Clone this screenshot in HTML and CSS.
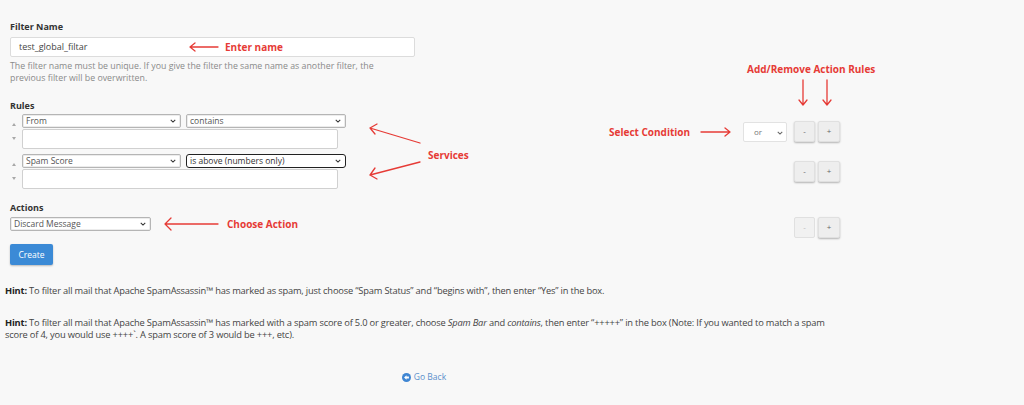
FILE: index.html
```html
<!DOCTYPE html>
<html>
<head>
<meta charset="utf-8">
<link rel="stylesheet" href="styles.css">
</head>
<body>
<div class="page">
  <div class="form">
    <div class="label">Filter Name</div>
    <div class="name-input">test_global_filtar</div>
    <p class="help">The filter name must be unique. If you give the filter the same name as another filter, the<br>previous filter will be overwritten.</p>

    <div class="label rules-label">Rules</div>

    <div class="row rule-row">
      <div class="main">
        <div class="movers"><span class="up"></span><span class="down"></span></div>
        <div class="rule">
          <div class="selects">
            <div class="sel w157">From<svg class="chev" viewBox="0 0 8 5"><path d="M1 1l3 3 3-3" /></svg></div>
            <div class="sel w158">contains<svg class="chev" viewBox="0 0 8 5"><path d="M1 1l3 3 3-3" /></svg></div>
          </div>
          <div class="textarea"></div>
        </div>
      </div>
      <div class="cond">or<svg class="chev" viewBox="0 0 8 5"><path d="M1 1l3 3 3-3" /></svg></div>
      <div class="btns"><span class="btn">-</span><span class="btn">+</span></div>
    </div>

    <div class="row rule-row second">
      <div class="main">
        <div class="movers"><span class="up"></span><span class="down"></span></div>
        <div class="rule">
          <div class="selects">
            <div class="sel w157">Spam Score<svg class="chev" viewBox="0 0 8 5"><path d="M1 1l3 3 3-3" /></svg></div>
            <div class="sel w158 focused">is above (numbers only)<svg class="chev" viewBox="0 0 8 5"><path d="M1 1l3 3 3-3" /></svg></div>
          </div>
          <div class="textarea"></div>
        </div>
      </div>
      <div class="cond empty"></div>
      <div class="btns"><span class="btn">-</span><span class="btn">+</span></div>
    </div>

    <div class="label actions-label">Actions</div>
    <div class="row action-row">
      <div class="main">
        <div class="sel w139">Discard Message<svg class="chev" viewBox="0 0 8 5"><path d="M1 1l3 3 3-3" /></svg></div>
      </div>
      <div class="cond empty"></div>
      <div class="btns"><span class="btn disabled">-</span><span class="btn">+</span></div>
    </div>

    <button class="create">Create</button>

    <p class="hint"><b>Hint:</b> To filter all mail that Apache SpamAssassin™ has marked as spam, just choose “Spam Status” and “begins with”, then enter “Yes” in the box.</p>
    <p class="hint second-hint"><b>Hint:</b> To filter all mail that Apache SpamAssassin™ has marked with a spam score of 5.0 or greater, choose <i>Spam Bar</i> and <i>contains</i>, then enter “+++++” in the box (Note: If you wanted to match a spam score of 4, you would use ++++`. A spam score of 3 would be +++, etc).</p>

    <div class="goback"><span class="back-icon"><svg viewBox="0 0 10 10"><circle cx="5" cy="5" r="5" fill="#3f86d3"/><path d="M2.3 5L5 2.6V4h2.7v2H5v1.4z" fill="#fff"/></svg></span>Go Back</div>
  </div>

  <div class="note n-enter">Enter name</div>
  <div class="note n-addremove">Add/Remove Action Rules</div>
  <div class="note n-select">Select Condition</div>
  <div class="note n-services">Services</div>
  <div class="note n-action">Choose Action</div>

  <svg class="arrows" width="1024" height="405" viewBox="0 0 1024 405">
    <g fill="none" stroke="#e63b36" stroke-width="1.3" stroke-linecap="round" stroke-linejoin="round">
      <path d="M218 47H190M195 43l-5 4 5 4"/>
      <path d="M803 80V105M799 100l4 5 4-5"/>
      <path d="M827 80V105M823 100l4 5 4-5"/>
      <path d="M701 132H730M725 128l5 4-5 4"/>
      <path d="M420 143L370 128M377 124l-7 4 5 6"/>
      <path d="M420 162L370 175M375 168l-5 7 7 4"/>
      <path d="M218 224H165M171 218l-6 6 6 6"/>
    </g>
  </svg>
</div>
</body>
</html>
```
FILE: styles.css
```css
html, body {
  margin: 0;
  padding: 0;
  background: #f8f8f8;
}
body {
  font-family: "Open Sans", "Liberation Sans", sans-serif;
  font-size: 8px;
  color: #333;
}
.page {
  position: relative;
  width: 1024px;
  height: 405px;
  overflow: hidden;
}
.form {
  padding: 21px 0 0 10px;
  width: 828px;
}
.label {
  font-weight: 700;
  font-size: 9px;
  line-height: 12px;
  color: #333;
}
.name-input {
  margin-top: 4px;
  width: 395px;
  height: 18px;
  line-height: 18px;
  padding-left: 8px;
  background: #fff;
  border: 1px solid #dcdcdc;
  border-radius: 2px;
  font-size: 9px;
  color: #444;
}
.help {
  margin: 3px 0 0;
  line-height: 12px;
  color: #8a8a8a;
  font-size: 8.8px;
}
.rules-label { margin-top: 16px; }
.row {
  display: flex;
  align-items: center;
}
.rule-row { margin-top: 2px; }
.rule-row.second { margin-top: 5px; }
.main {
  width: 733px;
  display: flex;
  flex-shrink: 0;
}
.movers {
  width: 12px;
  display: flex;
  flex-direction: column;
  align-items: flex-start;
  padding-left: 2px;
  box-sizing: border-box;
}
.up, .down {
  width: 0;
  height: 0;
  border-left: 2.5px solid transparent;
  border-right: 2.5px solid transparent;
}
.up {
  margin-top: 9px;
  border-bottom: 3px solid #a8a8a8;
}
.down {
  margin-top: 11px;
  border-top: 3px solid #a8a8a8;
}
.rule { display: flex; flex-direction: column; }
.selects { display: flex; gap: 5px; }
.sel {
  position: relative;
  height: 12px;
  line-height: 12px;
  padding-left: 3px;
  background: #fff;
  border: 1px solid #b5b5b5;
  border-radius: 2px;
  font-size: 8.5px;
  color: #555;
  box-sizing: content-box;
  box-shadow: inset 0 0 0 1px #ececec;
}
.sel.focused {
  border-color: #222;
  border-radius: 3px;
  box-shadow: none;
  color: #333;
}
.w157 { width: 154px; }
.w158 { width: 155px; }
.w139 { width: 136px; }
.chev {
  position: absolute;
  right: 4px;
  top: 4px;
  width: 6px;
  height: 4px;
}
.chev path {
  fill: none;
  stroke: #333;
  stroke-width: 1.4;
}
.textarea {
  margin-top: 1px;
  width: 314px;
  height: 18px;
  background: #fff;
  border: 1px solid #d0d0d0;
  border-radius: 2px;
}
.cond {
  position: relative;
  width: 42px;
  height: 18px;
  line-height: 18px;
  margin-right: 7px;
  background: #fff;
  border: 1px solid #e2e2e2;
  border-radius: 2px;
  font-size: 8px;
  color: #777;
  text-indent: 10px;
  flex-shrink: 0;
}
.cond .chev { top: 8px; right: 3px; }
.cond .chev path { stroke: #666; }
.cond.empty {
  background: transparent;
  border-color: transparent;
}
.btns { display: flex; gap: 3px; }
.btn {
  width: 19px;
  height: 19px;
  line-height: 18px;
  text-align: center;
  background: #eeeeee;
  border: 1px solid #e0e0e0;
  border-radius: 2px;
  box-shadow: 0 1px 2px rgba(0,0,0,0.28);
  font-size: 8px;
  color: #666;
  box-sizing: content-box;
}
.btn + .btn { width: 20px; }
.btn.disabled {
  box-shadow: none;
  color: #bbb;
  background: #f1f1f1;
}
.actions-label { margin-top: 13px; }
.action-row {
  margin-top: 3px;
  align-items: flex-start;
}
.create {
  display: block;
  margin-top: 6px;
  width: 43px;
  height: 21px;
  padding: 0;
  border: none;
  border-radius: 2px;
  background: #3b8ad6;
  color: #fff;
  font-family: "Open Sans", "Liberation Sans", sans-serif;
  font-size: 8.5px;
  box-shadow: 0 1px 2px rgba(0,0,0,0.25);
}
.hint {
  margin: 20px 0 0 -5px;
  width: 842px;
  line-height: 12px;
  font-size: 9.3px;
  color: #444;
  letter-spacing: -0.18px;
}
.hint b { color: #222; }
.second-hint { margin-top: 20px; }
.goback {
  margin-top: 30px;
  display: flex;
  align-items: center;
  justify-content: center;
  gap: 3px;
  line-height: 12px;
  font-size: 8.5px;
  color: #5b8fcb;
}
.back-icon { display: flex; }
.back-icon svg { width: 9px; height: 9px; }

.note {
  position: absolute;
  font-family: "Open Sans", "Liberation Sans", sans-serif;
  font-weight: 700;
  font-size: 10px;
  line-height: 14px;
  color: #e63b36;
  white-space: nowrap;
}
.n-enter { left: 225px; top: 40px; }
.n-addremove { left: 747px; top: 62px; }
.n-select { left: 609px; top: 125px; }
.n-services { left: 428px; top: 148px; }
.n-action { left: 227px; top: 217px; }
.arrows {
  position: absolute;
  left: 0;
  top: 0;
  pointer-events: none;
}
```
